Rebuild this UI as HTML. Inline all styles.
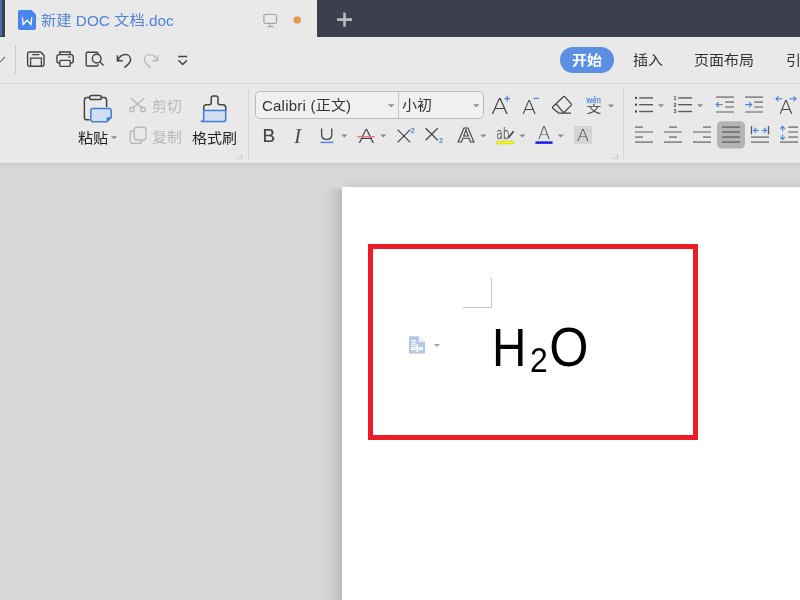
<!DOCTYPE html>
<html lang="zh-CN">
<head>
<meta charset="utf-8">
<title>新建 DOC 文档.doc</title>
<style>
html,body{margin:0;padding:0;}
body{width:800px;height:600px;overflow:hidden;position:relative;background:#d7d7d7;
 font-family:"Liberation Sans","Noto Sans CJK SC",sans-serif;color:#333;}
.abs{position:absolute;white-space:nowrap;line-height:1;}
#titlebar{left:0;top:0;width:800px;height:37px;background:#3c404d;}
#bluestrip{left:0;top:0;width:2px;height:36px;background:#4a6aa5;}
#tab{left:5px;top:0;width:312px;height:37px;background:#e9e9e9;}
#qbar{left:0;top:37px;width:800px;height:46px;background:#e9e9e9;}
#sepline{left:0;top:83px;width:800px;height:1px;background:#dadada;}
#ribbon{left:0;top:84px;width:800px;height:79px;background:#e9e9e9;}
#docshadow{left:0;top:163px;width:800px;height:7px;background:linear-gradient(#c9c9c9,#d2d2d2 25%,#d7d7d7);}
#shl{left:324px;top:187px;width:18px;height:413px;background:linear-gradient(to right,#d7d7d7,#cdcdcd 45%,#bcbcbc);-webkit-mask-image:linear-gradient(to bottom,transparent,#000 5px);mask-image:linear-gradient(to bottom,transparent,#000 5px);}
#sht{left:342px;top:178px;width:458px;height:9px;background:linear-gradient(to bottom,#d7d7d7,#cbcbcb);-webkit-mask-image:linear-gradient(to right,transparent,#000 8px);mask-image:linear-gradient(to right,transparent,#000 8px);}
#page{left:342px;top:187px;width:458px;height:413px;background:#fff;}
#redbox{left:368px;top:244px;width:320px;height:186px;border:5px solid #ed1c24;}
.sq{display:inline-block;transform:scaleY(0.9);transform-origin:50% 50%;}
#svg{left:0;top:0;}
</style>
</head>
<body>
<div id="root" style="position:absolute;left:0;top:0;width:800px;height:600px;will-change:transform;">
<div class="abs" id="titlebar"></div>
<div class="abs" id="bluestrip"></div>
<div class="abs" id="tab"></div>
<div class="abs" id="qbar"></div>
<div class="abs" id="sepline"></div>
<div class="abs" id="ribbon"></div>
<div class="abs" id="docshadow"></div>
<div class="abs" id="shl"></div>
<div class="abs" id="sht"></div>
<div class="abs" id="page"></div>
<div class="abs" id="redbox"></div>

<!-- TEXT -->
<div class="abs" id="title" style="left:41px;top:13px;font-size:15.3px;color:#4f82d8;"><span class="sq">新建</span> DOC <span class="sq">文档</span>.doc</div>

<div class="abs" id="pill" style="left:560px;top:47px;width:54px;height:26px;border-radius:13px;background:#5b8fe3;"></div>
<div class="abs" id="m1" style="left:572px;top:53px;font-size:15px;color:#fff;font-weight:bold;"><span class="sq">开始</span></div>
<div class="abs" id="m2" style="left:633px;top:53px;font-size:15px;"><span class="sq">插入</span></div>
<div class="abs" id="m3" style="left:694px;top:53px;font-size:15px;"><span class="sq">页面布局</span></div>
<div class="abs" id="m4" style="left:786px;top:53px;font-size:15px;"><span class="sq">引</span></div>

<div class="abs" id="r1" style="left:78px;top:131px;font-size:15px;color:#222;"><span class="sq">粘贴</span></div>
<div class="abs" id="r2" style="left:152px;top:99px;font-size:15px;color:#b9b9b9;"><span class="sq">剪切</span></div>
<div class="abs" id="r3" style="left:152px;top:130px;font-size:15px;color:#b9b9b9;"><span class="sq">复制</span></div>
<div class="abs" id="r4" style="left:192px;top:131px;font-size:15px;color:#222;"><span class="sq">格式刷</span></div>

<div class="abs" id="combo" style="left:255px;top:91px;width:227px;height:26px;border:1px solid #bababa;border-radius:5px;background:#f0f0f0;"></div>
<div class="abs" id="combodiv" style="left:398px;top:92px;width:1px;height:26px;background:#c6c6c6;"></div>
<div class="abs" id="f1" style="left:262px;top:97.5px;font-size:15px;color:#333;letter-spacing:0.22px;">Calibri (<span class="sq">正文</span>)</div>
<div class="abs" id="f2" style="left:402px;top:98px;font-size:15px;color:#333;"><span class="sq">小初</span></div>

<!-- DOCUMENT TEXT -->
<svg class="abs" id="doc" style="left:0;top:0" width="800" height="600" viewBox="0 0 800 600">
<g font-family="Liberation Sans, sans-serif" fill="#000">
<text id="dH" transform="translate(491.9 365.7) scale(0.881 1)" font-size="54.1">H</text>
<text id="d2" transform="translate(530.1 371.7) scale(0.885 1)" font-size="36">2</text>
<text id="dO" transform="translate(549.2 365.9) scale(0.925 1)" font-size="54.6">O</text>
</g>
</svg>

<svg class="abs" id="svg" width="800" height="600" viewBox="0 0 800 600" fill="none">
<path d="M20 10 H31.5 L36 14.5 V28 Q36 30 34 30 H20 Q18 30 18 28 V12 Q18 10 20 10 Z" fill="#4886ea"/>
<path d="M22.4 17.3 L23.2 24.5 L27.1 20.3 L31 24.5 L31.8 17.3" stroke="#fff" stroke-width="1.3" stroke-linejoin="miter"/>
<rect x="263.9" y="14.5" width="12.6" height="8.8" rx="1.2" stroke="#a6a6a6" stroke-width="1.2"/>
<path d="M270.2 23.3 V26.5 M267.2 26.6 H273.4" stroke="#a6a6a6" stroke-width="1.2"/>
<circle cx="297.2" cy="19.9" r="3.7" fill="#e9994c"/>
<path d="M337 19.6 H352 M344.5 12.6 V26.7" stroke="#b9bbc5" stroke-width="2.6"/>
<path d="M-4 58 L0 62 L5 57" stroke="#777" stroke-width="1.2"/>
<path d="M15.5 45 V74" stroke="#c9c9c9" stroke-width="1"/>
<path d="M29.2 52 H40.6 L44 55.4 V64.6 Q44 66.3 42.3 66.3 H29.2 Q27.6 66.3 27.6 64.6 V53.7 Q27.6 52 29.2 52 Z" stroke="#444" stroke-width="1.4"/>
<path d="M30.6 66.3 V58.2 H41.4 V66.3 M32.2 54.6 H39.4" stroke="#444" stroke-width="1.3"/>
<rect x="56.9" y="54.6" width="16.3" height="8.4" rx="2.2" stroke="#444" stroke-width="1.4"/>
<path d="M59.8 54.6 V52 H70.2 V54.6" stroke="#444" stroke-width="1.4"/>
<rect x="59.8" y="60.4" width="10.4" height="6" rx="0.8" fill="#e9e9e9" stroke="#444" stroke-width="1.4"/>
<path d="M68.2 57 H70.6" stroke="#444" stroke-width="1.3"/>
<path d="M98 54 V53.5 Q98 52.2 96.7 52.2 H87.5 Q86.2 52.2 86.2 53.5 V64.7 Q86.2 66 87.5 66 H96.7 Q98 66 98 64.7 V64" stroke="#444" stroke-width="1.4"/>
<circle cx="96.7" cy="58.6" r="4.4" stroke="#444" stroke-width="1.4"/>
<path d="M99.9 61.9 L103.7 65.5" stroke="#444" stroke-width="1.4"/>
<path d="M117.4 55.2 V60.8 H122.8" stroke="#444" stroke-width="1.5"/>
<path d="M117.8 60.4 C119.5 56.5 122.5 54.6 125.6 54.6 C128.6 54.6 130.6 57 130.6 59.8 C130.6 62.5 128.5 64.5 124.4 67.6" stroke="#444" stroke-width="1.5"/>
<path d="M157.7 55.2 V60.8 H152.3" stroke="#b8b8b8" stroke-width="1.4"/>
<path d="M157.3 60.4 C155.6 56.5 152.6 54.6 149.5 54.6 C146.5 54.6 144.5 57 144.5 59.8 C144.5 62.5 146.6 64.5 150.7 67.6" stroke="#b8b8b8" stroke-width="1.4"/>
<path d="M178.3 56.4 H187.1 M178.4 60.2 L182.7 64.5 L187 60.2" stroke="#444" stroke-width="1.5"/>
<path d="M89.5 97.6 H87 Q84.4 97.6 84.4 100.2 V117.2 Q84.4 119.8 87 119.8 H89.6 M101.5 97.6 H104 Q106.6 97.6 106.6 100.2 V107.2" stroke="#444" stroke-width="1.5"/>
<rect x="89.6" y="95.4" width="11.8" height="4.2" rx="2.1" stroke="#444" stroke-width="1.5"/>
<path d="M93 108.6 H109 Q111.2 108.6 111.2 110.8 V117.4 L106.8 121.8 H93 Q90.8 121.8 90.8 119.6 V110.8 Q90.8 108.6 93 108.6 Z" fill="#d3dff1" stroke="#3f7fd8" stroke-width="1.5"/>
<path d="M111.6 117.2 H106.6 V122.2 Z" fill="#3f7fd8"/>
<path d="M111 136.2 H117.2 L114.1 139.2 Z" fill="#8a8a8a"/>
<path d="M130.6 98 L141.6 107.6 M144.4 98 L133.4 107.6" stroke="#b8b8b8" stroke-width="1.4"/>
<circle cx="131.9" cy="109.4" r="2.2" stroke="#b8b8b8" stroke-width="1.4"/><circle cx="143.1" cy="109.4" r="2.2" stroke="#b8b8b8" stroke-width="1.4"/>
<rect x="130.3" y="130.8" width="11.4" height="12.6" rx="2.4" stroke="#b8b8b8" stroke-width="1.4"/>
<rect x="134.3" y="127.2" width="11.6" height="12.8" rx="2.4" fill="#e9e9e9" stroke="#b8b8b8" stroke-width="1.4"/>
<path d="M203.7 110.4 V107.6 Q203.7 104.8 206.5 104.8 H209.2 Q211.2 104.8 211.2 102.8 V98.2 Q211.2 96 213.4 96 H215.8 Q218 96 218 98.2 V102.8 Q218 104.8 220 104.8 H222.9 Q225.7 104.8 225.7 107.6 V110.4" stroke="#444" stroke-width="1.5"/>
<path d="M203.7 110.6 H225.7 V119.2 Q225.7 121.6 223.3 121.6 H200.6 Q203.7 121.6 203.7 118.6 Z" fill="#d3dff1" stroke="#3f7fd8" stroke-width="1.5"/>
<path d="M241.79999999999998 153.8 V158.20000000000002 H237.2" stroke="#c6c6c6" stroke-width="1.1"/>
<path d="M617.4 153.8 V158.20000000000002 H612.8" stroke="#c6c6c6" stroke-width="1.1"/>
<path d="M248.5 88 V160 M623.5 88 V160" stroke="#d6d6d6" stroke-width="1"/>
<path d="M388.1 104.3 H394.3 L391.20000000000005 107.3 Z" fill="#8a8a8a"/>
<path d="M473.1 104.3 H479.3 L476.20000000000005 107.3 Z" fill="#8a8a8a"/>
<text x="491" y="113.9" font-size="21.5" font-family="DejaVu Sans, Liberation Sans, sans-serif" font-weight="200" fill="#444" textLength="17.6" lengthAdjust="spacingAndGlyphs">A</text>
<path d="M504.4 98.6 H510 M507.2 95.8 V101.4" stroke="#4a86e0" stroke-width="1.3"/>
<text x="522" y="113.9" font-size="19.6" font-family="DejaVu Sans, Liberation Sans, sans-serif" font-weight="200" fill="#444" textLength="14.4" lengthAdjust="spacingAndGlyphs">A</text>
<path d="M533.4 98.4 H539" stroke="#4a86e0" stroke-width="1.3"/>
<path d="M552.8 106.8 L563.4 96.7 Q564.2 96 565 96.8 L571.2 103.8 Q571.9 104.6 571.2 105.4 L563.4 113 H558.6 L552.8 108.2 Q552.1 107.5 552.8 106.8 Z M556.2 104 L563.7 112.8 M563.4 113.1 H571" stroke="#444" stroke-width="1.25" stroke-linejoin="round"/>
<text x="586.6" y="102.6" font-size="9.6" font-family="Liberation Sans, sans-serif" fill="#4a86e0" stroke="#4a86e0" stroke-width="0.25" textLength="14.2" lengthAdjust="spacingAndGlyphs">wén</text>
<text transform="translate(586.6 113.3) scale(1 0.72)" font-size="15" font-family="Liberation Sans, Noto Sans CJK SC, sans-serif" fill="#444">文</text>
<path d="M607.8 104.4 H614.0 L610.9 107.4 Z" fill="#8a8a8a"/>
<text x="262.4" y="142" font-size="19" font-family="Liberation Sans, sans-serif" fill="#444" stroke="#444" stroke-width="0.2">B</text>
<text x="294" y="142.5" font-size="21.4" font-family="Liberation Serif, serif" font-style="italic" fill="#505050">I</text>
<path d="M321.6 128.4 V134.4 Q321.6 139.4 326.7 139.4 Q331.8 139.4 331.8 134.4 V128.4" stroke="#444" stroke-width="1.3"/>
<path d="M320.4 142.4 H333.4" stroke="#5b8fe3" stroke-width="1.6"/>
<path d="M341.2 134.4 H347.4 L344.3 137.4 Z" fill="#8a8a8a"/>
<text x="357.9" y="142.7" font-size="20" font-family="DejaVu Sans, Liberation Sans, sans-serif" font-weight="200" fill="#444" textLength="16.8" lengthAdjust="spacingAndGlyphs">A</text>
<path d="M357.4 136.8 H374.6" stroke="#e27272" stroke-width="1.4"/>
<path d="M380.2 134.4 H386.4 L383.3 137.4 Z" fill="#8a8a8a"/>
<path d="M397.6 129.6 L410.2 142.4 M410.2 129.6 L397.6 142.4" stroke="#444" stroke-width="1.2"/>
<text x="410.8" y="133.4" font-size="7" font-family="Liberation Sans, sans-serif" font-weight="bold" fill="#4a86e0">2</text>
<path d="M425.6 128.2 L437.8 140.2 M437.8 128.2 L425.6 140.2" stroke="#444" stroke-width="1.2"/>
<text x="438.9" y="142.8" font-size="7" font-family="Liberation Sans, sans-serif" font-weight="bold" fill="#4a86e0">2</text>
<text x="457.4" y="142.4" font-size="21" font-family="Liberation Sans, sans-serif" font-weight="bold" fill="#e9e9e9" stroke="#444" stroke-width="1" textLength="17" lengthAdjust="spacingAndGlyphs">A</text>
<path d="M480.3 134.4 H486.5 L483.40000000000003 137.4 Z" fill="#8a8a8a"/>
<text x="496.2" y="139" font-size="15" font-family="DejaVu Sans, Liberation Sans, sans-serif" font-weight="200" fill="#444" stroke="#444" stroke-width="0.25" textLength="13.2" lengthAdjust="spacingAndGlyphs">ab</text>
<path d="M507.4 139 L508.4 136.4 L513 130.8 L514.3 131.8 L509.7 137.6 Z" fill="#444"/>
<rect x="496.3" y="141.2" width="17.8" height="2.6" rx="1" fill="#ffff00" stroke="#c9c930" stroke-width="0.8"/>
<path d="M519.3 134.4 H525.5 L522.4 137.4 Z" fill="#8a8a8a"/>
<text x="538" y="139" font-size="17.4" font-family="DejaVu Sans, Liberation Sans, sans-serif" font-weight="200" fill="#444" textLength="12.2" lengthAdjust="spacingAndGlyphs">A</text>
<path d="M535.4 142.6 H552.6" stroke="#1414e6" stroke-width="2.4"/>
<path d="M557.7 134.4 H563.9000000000001 L560.8000000000001 137.4 Z" fill="#8a8a8a"/>
<rect x="574" y="126" width="18" height="17.8" fill="#d4d4d4"/>
<text x="577" y="140.5" font-size="15.6" font-family="DejaVu Sans, Liberation Sans, sans-serif" font-weight="200" fill="#444" textLength="12" lengthAdjust="spacingAndGlyphs">A</text>
<path d="M639.2 97.9 H653" stroke="#5a5a5a" stroke-width="1.4"/>
<rect x="635" y="96.9" width="2" height="2" fill="#444"/>
<path d="M678.3 97.9 H692.1" stroke="#5a5a5a" stroke-width="1.4"/>
<path d="M639.2 104.7 H653" stroke="#5a5a5a" stroke-width="1.4"/>
<rect x="635" y="103.7" width="2" height="2" fill="#444"/>
<path d="M678.3 104.7 H692.1" stroke="#5a5a5a" stroke-width="1.4"/>
<path d="M639.2 111.5 H653" stroke="#5a5a5a" stroke-width="1.4"/>
<rect x="635" y="110.5" width="2" height="2" fill="#444"/>
<path d="M678.3 111.5 H692.1" stroke="#5a5a5a" stroke-width="1.4"/>
<path d="M657.9 104.2 H664.1 L661.0 107.2 Z" fill="#8a8a8a"/>
<path d="M697 104.2 H703.2 L700.1 107.2 Z" fill="#8a8a8a"/>
<text x="673.6" y="99.80000000000001" font-size="5.4" font-family="Liberation Sans, sans-serif" font-weight="bold" fill="#444">1</text>
<text x="673.6" y="106.60000000000001" font-size="5.4" font-family="Liberation Sans, sans-serif" font-weight="bold" fill="#444">2</text>
<text x="673.6" y="113.4" font-size="5.4" font-family="Liberation Sans, sans-serif" font-weight="bold" fill="#444">3</text>
<path d="M716 97.1 H734 M745.1 97.1 H763" stroke="#8c8c8c" stroke-width="1.7"/>
<path d="M725.1 102.1 H734 M754.2 102.1 H763" stroke="#8c8c8c" stroke-width="1.7"/>
<path d="M725.1 107 H734 M754.2 107 H763" stroke="#8c8c8c" stroke-width="1.7"/>
<path d="M716 112 H734 M745.1 112 H763" stroke="#8c8c8c" stroke-width="1.7"/>
<path d="M716.2 104.6 H722.6" stroke="#4a86e0" stroke-width="1.2"/>
<path d="M718.7 102.1 L716.2 104.6 L718.7 107.1" stroke="#4a86e0" stroke-width="1.2"/>
<path d="M745.2 104.6 H751.6" stroke="#4a86e0" stroke-width="1.2"/>
<path d="M749.1 102.1 L751.6 104.6 L749.1 107.1" stroke="#4a86e0" stroke-width="1.2"/>
<text x="779" y="113.5" font-size="19.6" font-family="DejaVu Sans, Liberation Sans, sans-serif" font-weight="200" fill="#444" textLength="14" lengthAdjust="spacingAndGlyphs">A</text>
<path d="M776 98.8 H782.4" stroke="#4a86e0" stroke-width="1.2"/>
<path d="M778.5 96.3 L776 98.8 L778.5 101.3" stroke="#4a86e0" stroke-width="1.2"/>
<path d="M789.4 98.8 H796" stroke="#4a86e0" stroke-width="1.2"/>
<path d="M793.5 96.3 L796 98.8 L793.5 101.3" stroke="#4a86e0" stroke-width="1.2"/>
<rect x="717" y="121.2" width="28" height="27.4" rx="4.5" fill="#b4b4b4"/>
<path d="M635 127.1 H643 M669 127.1 H677 M703 127.1 H711" stroke="#8c8c8c" stroke-width="1.7"/>
<path d="M722 127.1 H740" stroke="#727272" stroke-width="1.7"/>
<path d="M635 132 H653 M663.9 132 H681.9 M693 132 H711" stroke="#8c8c8c" stroke-width="1.7"/>
<path d="M722 132 H740" stroke="#727272" stroke-width="1.7"/>
<path d="M635 137.1 H643 M669 137.1 H677 M703 137.1 H711" stroke="#8c8c8c" stroke-width="1.7"/>
<path d="M722 137.1 H740" stroke="#727272" stroke-width="1.7"/>
<path d="M635 142.1 H653 M663.9 142.1 H681.9 M693 142.1 H711" stroke="#8c8c8c" stroke-width="1.7"/>
<path d="M722 142.1 H740" stroke="#727272" stroke-width="1.7"/>
<path d="M751.5 126 V134.6 M768.5 126 V134.6" stroke="#5a5a5a" stroke-width="1.3"/>
<path d="M753.8 130.4 H758.6" stroke="#4a86e0" stroke-width="1.2"/>
<path d="M756.1999999999999 128.0 L753.8 130.4 L756.1999999999999 132.8" stroke="#4a86e0" stroke-width="1.2"/>
<path d="M761.8 130.4 H766.4" stroke="#4a86e0" stroke-width="1.2"/>
<path d="M764.0 128.0 L766.4 130.4 L764.0 132.8" stroke="#4a86e0" stroke-width="1.2"/>
<path d="M751 137.1 H769 M751 142.1 H769" stroke="#8c8c8c" stroke-width="1.7"/>
<path d="M782.6 126.4 V131.2" stroke="#4a86e0" stroke-width="1.2"/>
<path d="M780.2 128.8 L782.6 126.4 L785.0 128.8" stroke="#4a86e0" stroke-width="1.2"/>
<path d="M782.6 134.6 V139.4" stroke="#4a86e0" stroke-width="1.2"/>
<path d="M780.2 137.0 L782.6 139.4 L785.0 137.0" stroke="#4a86e0" stroke-width="1.2"/>
<path d="M788.2 127.1 H798 M788.2 132 H798 M788.2 137.1 H798 M780 142.1 H798" stroke="#8c8c8c" stroke-width="1.7"/>
<path d="M463 307.5 H491.5 V278" stroke="#c4c4c4" stroke-width="1"/>
<path d="M409 336.2 H418.8 L425 342 V353.6 H409 Z" fill="#b4c7e7"/>
<path d="M418.8 336.2 V342 H425 Z" fill="#f0f4fb"/>
<path d="M411 340.6 H416 M411 343 H416 M411 345.3 H416" stroke="#fff" stroke-width="1.2"/>
<rect x="411" y="347.2" width="12" height="3" fill="#fff"/>
<path d="M417.2 344 V352" stroke="#fff" stroke-width="1.5"/>
<path d="M413 348.7 H421" stroke="#b4c7e7" stroke-width="0.8" stroke-dasharray="1 0.6"/>
<path d="M433.8 343.9 H440.0 L436.90000000000003 346.9 Z" fill="#a0a0a0"/>
</svg>
</div>
</body>
</html>
